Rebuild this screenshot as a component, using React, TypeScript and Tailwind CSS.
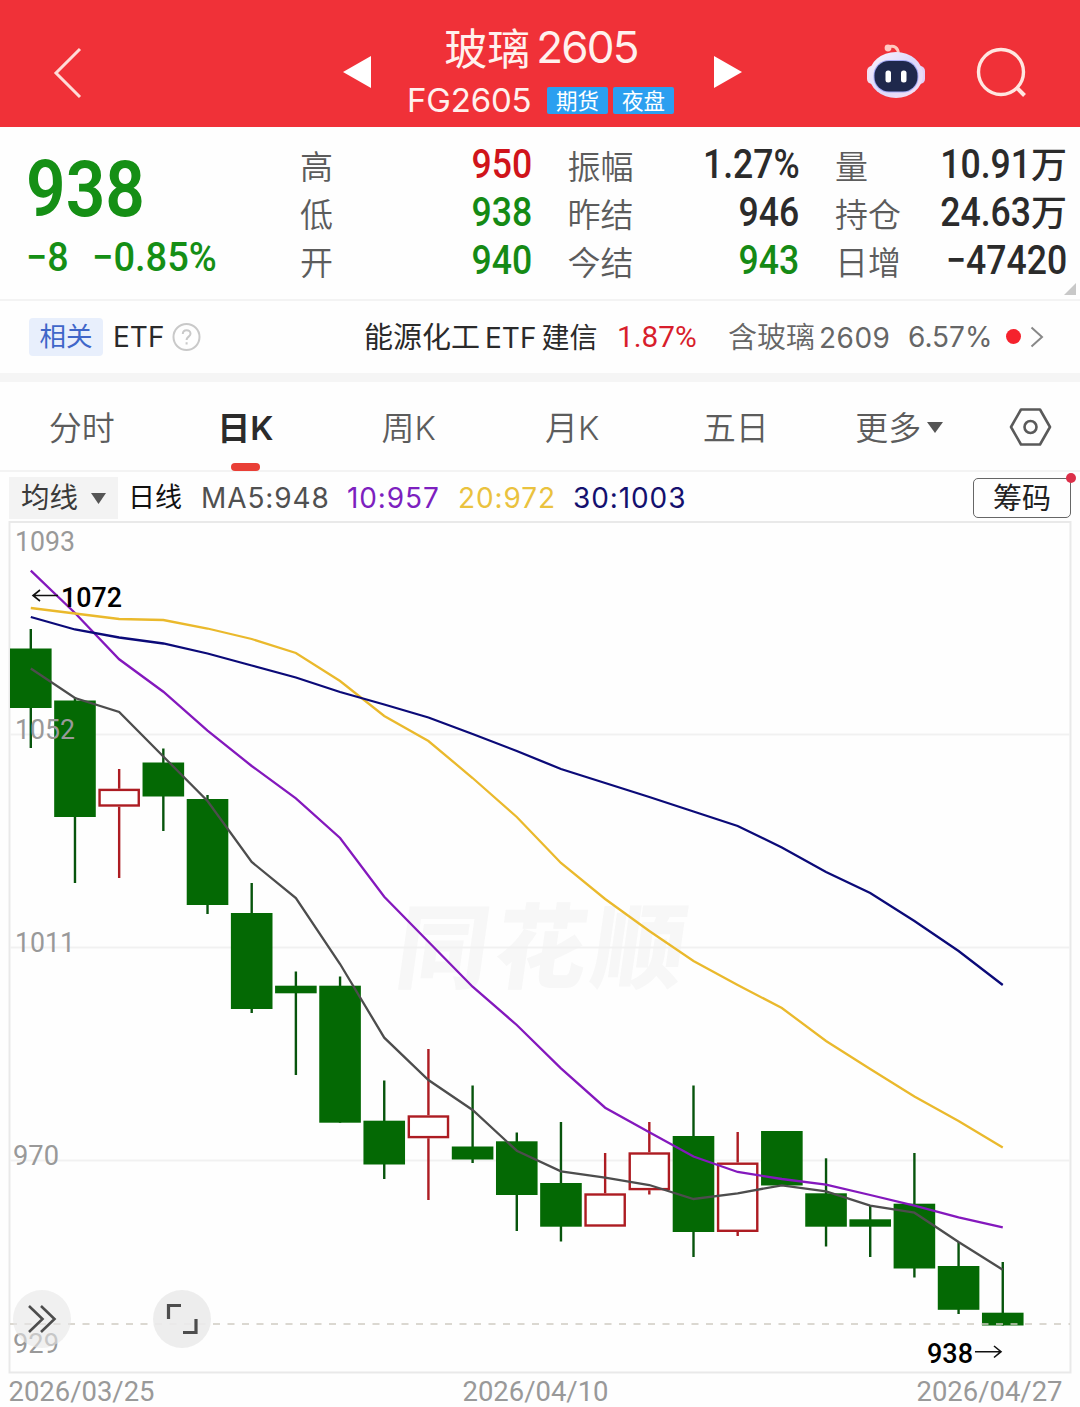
import { ReactNode } from "react";
import clsx from "clsx";

type Quote = { label: string; value: string; unit?: string; color: string };

const quotes: Quote[][] = [
    [
        { label: "高", value: "950", color: "text-[#d0141b]" },
        { label: "低", value: "938", color: "text-[#158a15]" },
        { label: "开", value: "940", color: "text-[#158a15]" },
    ],
    [
        { label: "振幅", value: "1.27%", color: "text-[#2b2b2b]" },
        { label: "昨结", value: "946", color: "text-[#2b2b2b]" },
        { label: "今结", value: "943", color: "text-[#158a15]" },
    ],
    [
        { label: "量", value: "10.91", unit: "万", color: "text-[#2b2b2b]" },
        { label: "持仓", value: "24.63", unit: "万", color: "text-[#2b2b2b]" },
        { label: "日增", value: "−47420", color: "text-[#2b2b2b]" },
    ],
];

const tabs = ["分时", "日K", "周K", "月K", "五日", "更多"];

// [body top, body bottom, wick top, wick bottom, rising]
const candles: [number, number, number, number, boolean?][] = [
    [648.5, 708, 629, 748],
    [700.5, 817, 697, 883],
    [788.7, 806.7, 769, 878, true],
    [762.5, 796.5, 748.5, 831],
    [799, 905, 795, 914],
    [913, 1009, 883, 1013],
    [985.7, 993.3, 971.5, 1075],
    [985.7, 1122.7, 976.5, 1122.7],
    [1120.7, 1164.5, 1080.5, 1179],
    [1115.3, 1138.3, 1049, 1200, true],
    [1146.5, 1159.5, 1085.5, 1163],
    [1141.3, 1195, 1132.5, 1231],
    [1183, 1226.7, 1122, 1241.5],
    [1193.3, 1226.7, 1153, 1226.7, true],
    [1152.3, 1190.3, 1122, 1194.5, true],
    [1136, 1232, 1085.5, 1257],
    [1162.5, 1232, 1132, 1236, true],
    [1131, 1185.5, 1131, 1185.5],
    [1193.3, 1226.7, 1158.3, 1246.5],
    [1219.3, 1226.7, 1205.7, 1257],
    [1203.7, 1268.5, 1153, 1277.5],
    [1266, 1309.8, 1242, 1314],
    [1312.7, 1325.5, 1262, 1325.5],
];

const averages = [
    {
        color: "#4d4d4d",
        points: [668.5, 698, 712, 756.5, 801, 862, 898, 964, 1037.7, 1080, 1110, 1150.7, 1171.3, 1177.7, 1185, 1199, 1193.3, 1185.3, 1191.3, 1205.7, 1212.7, 1242, 1269.7],
    },
    {
        color: "#8418bd",
        points: [570.7, 613, 659.3, 691.7, 730.7, 766, 798.3, 838, 896.7, 941.7, 986.7, 1025, 1068.3, 1107.7, 1132.3, 1156.5, 1172, 1179, 1184.7, 1195, 1205.7, 1217.3, 1227.3],
    },
    {
        color: "#eab92c",
        points: [608, 613.5, 619, 620, 628.5, 639, 653, 681, 716, 741, 778, 817, 863, 899, 931, 961, 985, 1008, 1041, 1069, 1096.5, 1121, 1147.5],
    },
    {
        color: "#0b0a78",
        points: [617, 629.5, 637.5, 643.5, 653.5, 665.5, 677.5, 692, 704.5, 717.5, 734, 751, 769, 783, 797, 811.5, 826, 847.5, 872, 893, 921, 951, 985],
    },
];

const candleX = (index: number) => 30.8 + index * 44.18;

// narrow figures used for prices
const Num = ({ children, className }: { children: ReactNode; className?: string }) => (
    <span className={clsx("inline-block whitespace-nowrap font-['Roboto',sans-serif] font-medium", className)}>{children}</span>
);

const Header = () => (
    <header className="flex h-[127px] items-center bg-[#f03138] text-[#fff1ee]">
        <button type="button" className="ml-[52px] mt-[18px]">
            <svg className="h-[52px] w-8" viewBox="0 0 32 52" fill="none" stroke="#ffdcd8" strokeWidth="3">
                <path d="M28 2 L4 26 L28 50" />
            </svg>
        </button>
        <button type="button" className="ml-[259px] mt-4">
            <svg className="h-8 w-7" viewBox="0 0 28 32" fill="#fff">
                <path d="M0 16 L28 0 V32 Z" />
            </svg>
        </button>
        <div className="ml-[33px] mt-[16px] flex w-[274px] flex-col items-center">
            <h1 className="flex h-[58px] items-center gap-1.5 text-[44px]">
                <span className="text-[43px] font-['Noto_Sans_CJK_SC',sans-serif] leading-none">玻璃</span>
                <span className="font-['Inter',sans-serif] font-normal leading-none tracking-[-1.8px]">2605</span>
            </h1>
            <div className="flex h-[50px] w-[268px] items-center">
                <span className="w-[140px] font-['Inter',sans-serif] text-[33px] font-normal tracking-[-0.2px]">FG2605</span>
                {["期货", "夜盘"].map((tag) => (
                    <span
                        key={tag}
                        className="mr-[5px] flex h-[27px] w-[61px] shrink-0 items-center justify-center rounded-xs bg-[#2b9ff0] pb-px font-['Noto_Sans_CJK_SC',sans-serif] text-[21.5px] text-white last:mr-0"
                    >
                        {tag}
                    </span>
                ))}
            </div>
        </div>
        <button type="button" className="ml-[36px] mt-4">
            <svg className="h-8 w-7" viewBox="0 0 28 32" fill="#fff">
                <path d="M28 16 L0 0 V32 Z" />
            </svg>
        </button>
        <Robot />
        <button type="button" className="ml-[49px] mt-[18px]">
            <svg className="h-[52px] w-[52px]" viewBox="0 0 52 52" fill="none" stroke="#ffe6e0" strokeWidth="3.4">
                <circle cx="25" cy="25" r="22.5" />
                <path d="M41 41 L48.5 48.5" strokeWidth="4" />
            </svg>
        </button>
    </header>
);

const Robot = () => (
    <svg className="ml-[123px] mt-[15px] h-[58px] w-[62px]" viewBox="0 0 62 58">
        <defs>
            <linearGradient id="shell" x1="0" y1="0" x2="1" y2="1">
                <stop offset="0" stopColor="#fdf3fb" />
                <stop offset="0.5" stopColor="#dcd9fb" />
                <stop offset="1" stopColor="#f9dff0" />
            </linearGradient>
        </defs>
        <path d="M23.5 5 C29 3 33 5.500 33.5 12" fill="none" stroke="#ffc9bd" strokeWidth="3" />
        <circle cx="23" cy="6" r="3.400" fill="#ffc9c4" />
        <rect x="2" y="24" width="12" height="18" rx="5" fill="#f3dff0" />
        <rect x="48" y="24" width="12" height="18" rx="5" fill="#e3d0f6" />
        <ellipse cx="31" cy="33" rx="27" ry="23" fill="url(#shell)" />
        <rect x="8.500" y="18" width="45" height="32.500" rx="15.500" fill="#a3a9f5" />
        <rect x="9.500" y="19" width="43" height="30.500" rx="14.500" fill="#1f284c" />
        <rect x="20.500" y="28.500" width="5.500" height="12" rx="2.500" fill="#fff" />
        <rect x="36" y="28.500" width="5.500" height="12" rx="2.500" fill="#fff" />
    </svg>
);

const QuotePanel = () => (
    <section className="relative flex h-[174px] border-b-2 border-[#f3f3f3]">
        <div className="w-[300px] pl-[26px] pt-[24px] text-[#158f15]">
            <Num className="block origin-left scale-x-[0.89] text-[78px] leading-[78px] !font-semibold">938</Num>
            <div className="mt-[6px] flex text-[40px] leading-[46px]">
                <Num className="w-[66px] origin-left scale-x-[0.94]">−8</Num>
                <Num className="origin-left scale-x-[0.95]">−0.85%</Num>
            </div>
        </div>
        <div className="flex gap-[35.500px] pt-[14px]">
            {quotes.map((column, index) => (
                <dl key={index} className="w-[232px]">
                    {column.map((quote) => (
                        <div key={quote.label} className="flex h-12 items-center justify-between">
                            <dt className="font-['Noto_Sans_CJK_SC',sans-serif] text-[33px] font-[350] leading-none text-[#5c5c5c]">{quote.label}</dt>
                            <dd className={clsx("flex items-center text-[40px] leading-none", quote.color)}>
                                <Num className="origin-right scale-x-[0.89]">{quote.value}</Num>
                                {quote.unit && (
                                    <span className="-mt-[6px] font-['Noto_Sans_CJK_SC',sans-serif] text-[36px] leading-none font-medium">{quote.unit}</span>
                                )}
                            </dd>
                        </div>
                    ))}
                </dl>
            ))}
        </div>
        <svg className="absolute bottom-[4px] right-[4px] size-3" viewBox="0 0 12 12" fill="#c8c8c8">
            <path d="M12 0 V12 H0 Z" />
        </svg>
    </section>
);

const RelatedBar = () => (
    <section className="flex h-[81px] items-center border-b-[9px] border-[#f5f5f5] font-['Inter','Noto_Sans_CJK_SC',sans-serif] text-[28px] text-[#2a2a2a]">
        <span className="ml-[29px] flex h-[38px] w-[74px] items-center justify-center rounded-sm bg-[#e8effc] text-[26.5px] text-[#3f66c9]">相关</span>
        <span className="ml-[10px] w-[53px] text-[28px]">ETF</span>
        <svg className="ml-[6px] size-[29px]" viewBox="0 0 29 29" fill="none" stroke="#c9c9c9" strokeWidth="2">
            <circle cx="14.5" cy="14" r="13" />
            <path d="M10.800 11 C10.800 6 18.500 6 18.500 10.700 C18.500 13.500 14.600 13.800 14.600 17 M14.600 19.300 V21.500" />
        </svg>
        <span className="ml-[163px] mt-px flex w-[253px] items-center gap-[5px]">
            <span className="text-[29px]">能源化工</span>
            <span className="text-[28px]">ETF</span>
            <span>建信</span>
        </span>
        <Num className="-mt-px w-[111px] origin-left scale-x-[0.99] text-[30px] !font-normal text-[#d81e2c]">1.87%</Num>
        <span className="mt-px flex w-[180px] items-center gap-1 text-[#666]">
            <span className="text-[29px] font-[350]">含玻璃</span>
            <span className="tracking-[0.5px]">2609</span>
        </span>
        <span className="w-[98px] text-[#666]">6.57%</span>
        <span className="-mt-px size-[15px] rounded-full bg-[#f5222d]" />
        <svg className="-mt-px ml-[9px] h-[22px] w-[14px]" viewBox="0 0 14 22" fill="none" stroke="#888" strokeWidth="2">
            <path d="M1.500 1.500 L12 11 L1.500 20.500" />
        </svg>
    </section>
);

const PeriodTabs = () => (
    <nav className="flex h-[90px] border-b-2 border-[#f3f3f3] font-['Inter','Noto_Sans_CJK_SC',sans-serif] text-[33px] text-[#5c5c5c]">
        {tabs.map((tab) => (
            <button
                key={tab}
                type="button"
                className={clsx("relative flex w-[163.500px] items-center justify-center gap-1.5 pt-1.5", tab === "日K" ? "font-semibold text-[#2b2b2b]" : "font-[350]")}
            >
                {tab}
                {tab === "日K" && <span className="absolute -bottom-px h-[8px] w-[29px] rounded-full bg-[#e93f36]" />}
                {tab === "更多" && (
                    <svg className="-mt-1 h-[11px] w-4" viewBox="0 0 16 11" fill="#555">
                        <path d="M0 0 H16 L8 11 Z" />
                    </svg>
                )}
            </button>
        ))}
        <button type="button" className="flex flex-1 items-center justify-center pt-0.5">
            <svg className="h-[40px] w-[43px]" viewBox="0 0 43 40" fill="none" stroke="#5a5a5a" strokeWidth="2.600">
                <path d="M12 2.500 H31 L41 20 L31 37.500 H12 L2 20 Z" strokeLinejoin="round" />
                <circle cx="21.500" cy="20" r="6" />
            </svg>
        </button>
    </nav>
);

const IndicatorBar = () => (
    <div className="flex h-[48px] items-center pt-[3px] font-['Inter','Noto_Sans_CJK_SC',sans-serif] text-[28px] text-[#505050]">
        <button type="button" className="ml-[9px] flex h-[42px] w-[109px] items-center gap-[13px] bg-[#f3f3f3] pl-3 pt-0.5 text-[28.500px] text-[#3a3a3a]">
            均线
            <svg className="h-[11px] w-[15px]" viewBox="0 0 15 11" fill="#555">
                <path d="M0 0 H15 L7.500 11 Z" />
            </svg>
        </button>
        <span className="ml-[10px] mt-0.5 w-[73px] text-[27px] text-[#111]">日线</span>
        <span className="w-[146px] tracking-[0.9px]">MA5:948</span>
        <span className="w-[111px] tracking-[0.9px] text-[#7d1fbf]">10:957</span>
        <span className="w-[115px] tracking-[0.9px] text-[#eac23e]">20:972</span>
        <span className="tracking-[0.9px] text-[#14106e]">30:1003</span>
        <button type="button" className="relative ml-auto mr-[9px] flex h-[40px] w-[98px] items-center justify-center rounded-[5px] border-[1.500px] border-[#666] pt-0.5 text-[29px] text-[#222]">
            筹码
            <span className="absolute -right-[6px] -top-[6px] size-[10px] rounded-full bg-[#dc2f49]" />
        </button>
    </div>
);

const ChartLabel = ({ x, y, width, fill = "#999", weight = 400, children }: { x: number; y: number; width: number; fill?: string; weight?: number; children: string }) => (
    <text x={x} y={y} textLength={width} lengthAdjust="spacingAndGlyphs" fill={fill} fontWeight={weight} fontSize="28.5" fontFamily="Roboto, sans-serif">
        {children}
    </text>
);

const KLineChart = () => (
    <div className="relative h-[887px]">
        <svg className="block h-[887px] w-[1080px]" viewBox="0 520 1080 887">
            <text transform="translate(393 981) skewX(-8)" textLength="288" fontSize="92" fontWeight="900" fill="#f7f7f7" fontFamily="Noto Sans CJK SC, sans-serif">
                同花顺
            </text>
            <g fill="none" stroke="#ededed" strokeWidth="2">
                <rect x="9.500" y="522" width="1061" height="850.500" stroke="#e9e9e9" />
                <path d="M10 734.500 H1070 M10 947.500 H1070 M10 1160.500 H1070" stroke="#f1f1f1" />
            </g>

            {candles.map(([top, bottom, high, low, rising], index) => {
                const x = candleX(index);
                return rising ? (
                    <g key={index} stroke="#ad1c22" strokeWidth="2.4" fill="#fff">
                        <path d={`M${x} ${high} V${top} M${x} ${bottom} V${low}`} />
                        <rect x={x - 19.6} y={top + 1.2} width="39.2" height={bottom - top - 2.4} />
                    </g>
                ) : (
                    <g key={index}>
                        <path d={`M${x} ${high} V${low}`} stroke="#07540c" strokeWidth="2.4" />
                        <rect x={x - 20.8} y={top} width="41.6" height={bottom - top} fill="#046904" />
                    </g>
                );
            })}

            {averages.map(({ color, points }) => (
                <polyline
                    key={color}
                    points={points.map((y, index) => `${candleX(index)},${y}`).join(" ")}
                    fill="none"
                    stroke={color}
                    strokeWidth="2.3"
                />
            ))}

            <path d="M10 1324 H1070" stroke="#cfcbc2" strokeWidth="1.500" strokeDasharray="7 7.500" />

            <ChartLabel x={15} y={550.5} width={60}>1093</ChartLabel>
            <ChartLabel x={15} y={739} width={60}>1052</ChartLabel>
            <ChartLabel x={15} y={952} width={60}>1011</ChartLabel>
            <ChartLabel x={13} y={1165} width={46}>970</ChartLabel>
            <ChartLabel x={13} y={1353} width={46}>929</ChartLabel>

            <ChartLabel x={61} y={606.5} width={61} fill="#000" weight={500}>1072</ChartLabel>
            <ChartLabel x={927} y={1363} width={46} fill="#000" weight={500}>938</ChartLabel>
            <g fill="none" stroke="#111" strokeWidth="1.600">
                <path d="M58 595.500 H33 M40 590 L33 595.500 L40 601" />
                <path d="M975 1351.700 H1001 M994 1346 L1001 1351.700 L994 1357.500" />
            </g>

            <ChartLabel x={8.5} y={1401} width={146}>2026/03/25</ChartLabel>
            <ChartLabel x={462.5} y={1401} width={146}>2026/04/10</ChartLabel>
            <ChartLabel x={916.5} y={1401} width={146}>2026/04/27</ChartLabel>
        </svg>
        <button type="button" className="absolute left-[13px] top-[770px] flex size-[58px] items-center justify-center rounded-full bg-[#e6e6e6]/60">
            <svg className="size-[30px]" viewBox="0 0 30 30" fill="none" stroke="#4d4d4d" strokeWidth="2.600">
                <path d="M2 2 L15.500 15 L2 28 M14 2 L27.500 15 L14 28" />
            </svg>
        </button>
        <button type="button" className="absolute left-[153px] top-[770px] flex size-[58px] items-center justify-center rounded-full bg-[#ebebeb]/90">
            <svg className="size-[32px]" viewBox="0 0 32 32" fill="none" stroke="#4d4d4d" strokeWidth="3.200">
                <path d="M2.500 16 V2.500 H15 M17 29.500 H30 V16" />
            </svg>
        </button>
    </div>
);

export default function App() {
    return (
        <main className="h-[1407px] w-[1080px] overflow-hidden bg-[#fefefe]">
            <Header />
            <QuotePanel />
            <RelatedBar />
            <PeriodTabs />
            <IndicatorBar />
            <KLineChart />
        </main>
    );
}
